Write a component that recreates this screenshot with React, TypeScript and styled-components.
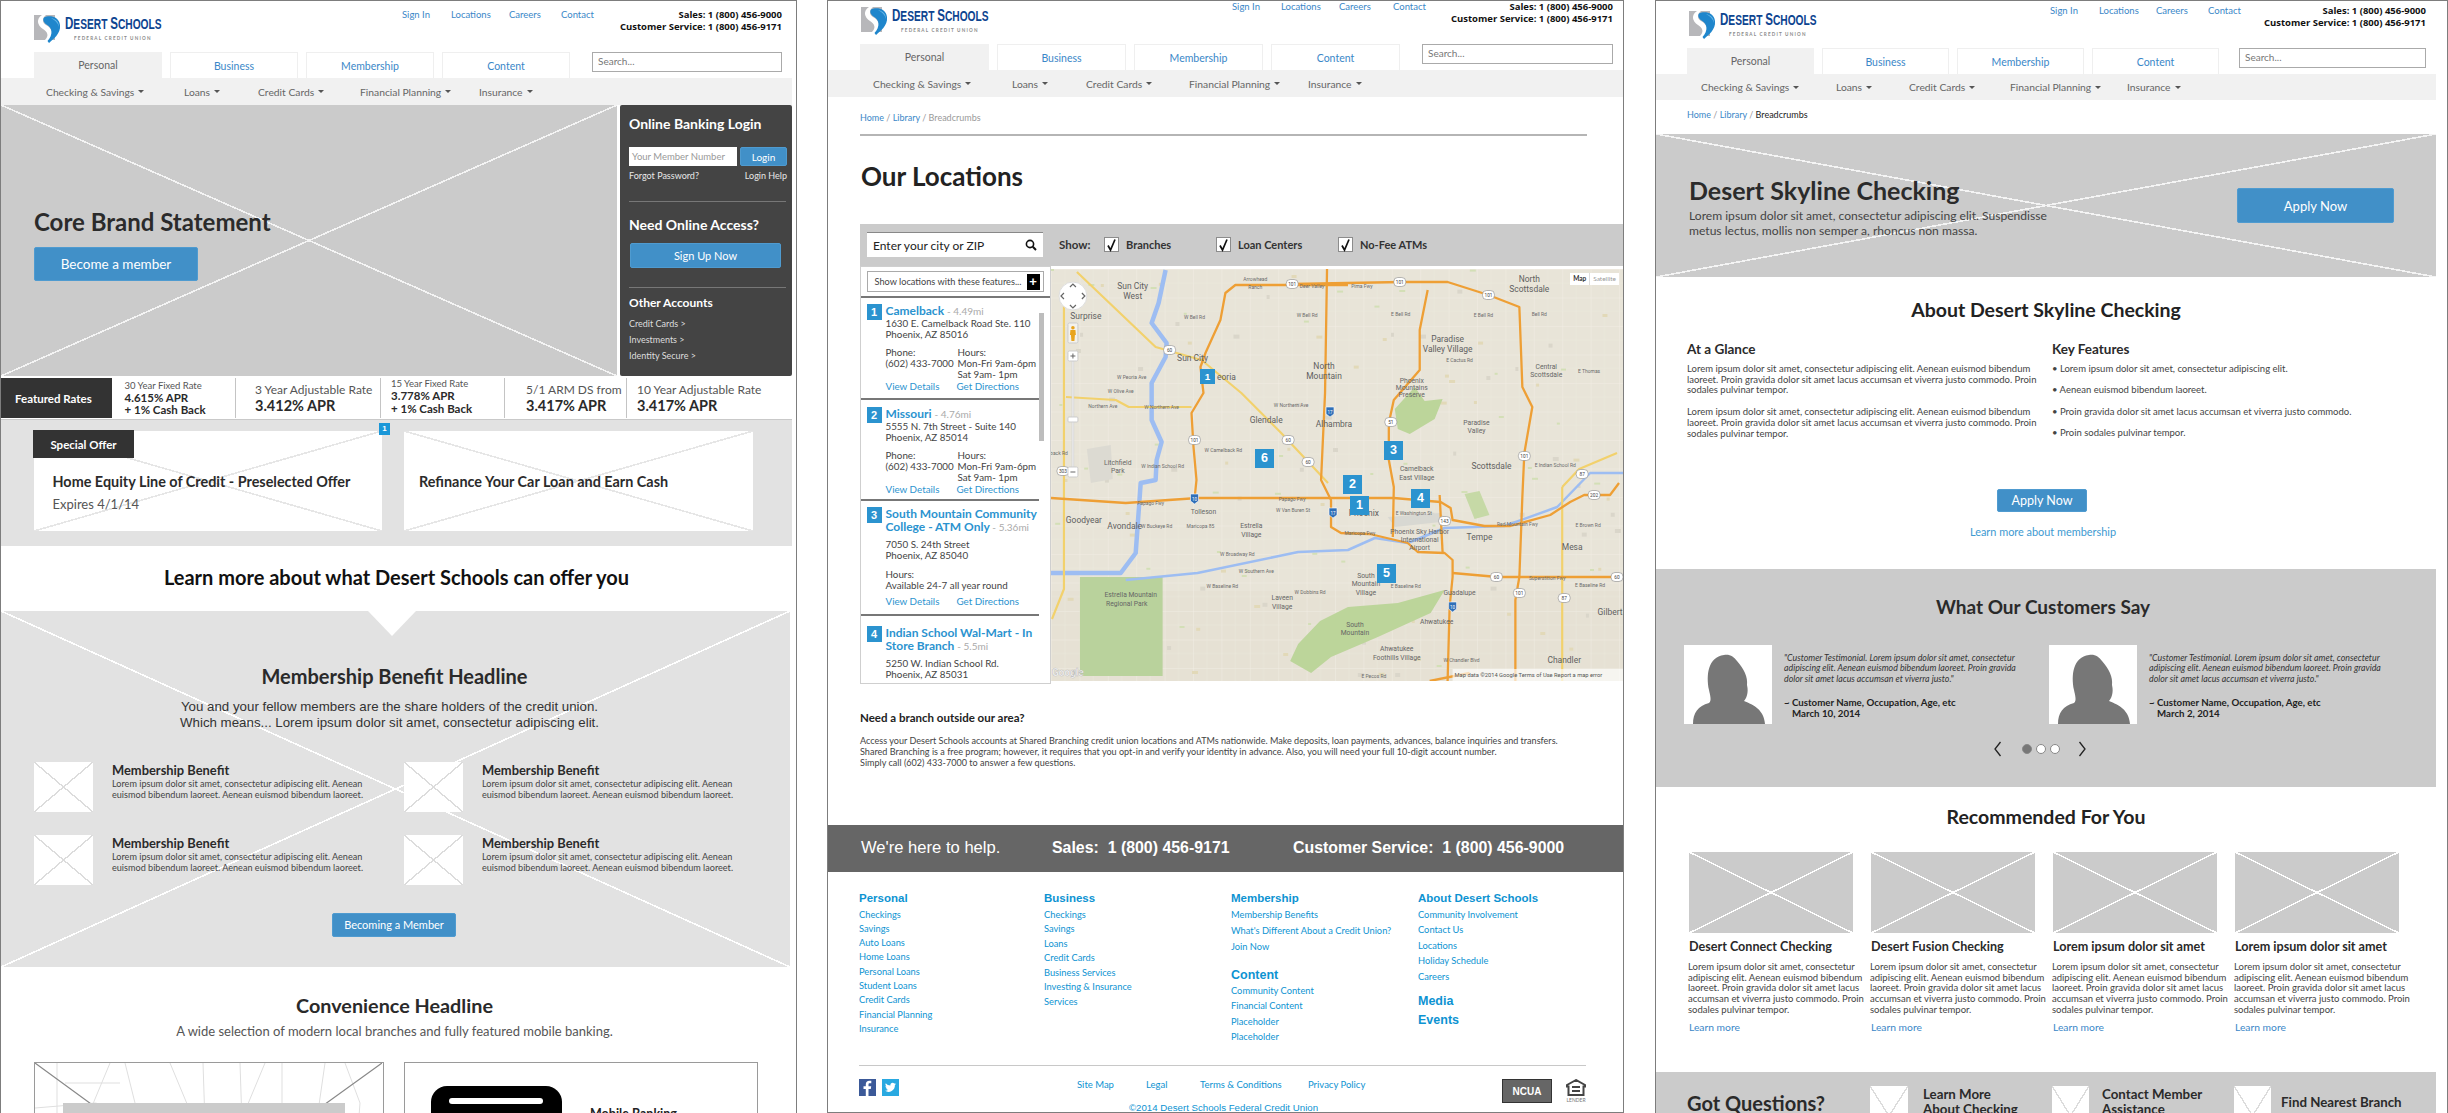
import React from "react";
import styled, { createGlobalStyle, css } from "styled-components";

const Global = createGlobalStyle`
  html, body { margin: 0; padding: 0; background: #fff; }
  body { font-family: Lato, "Open Sans", sans-serif; color: #222; width: 2448px; height: 1113px; overflow: hidden; }
  * { box-sizing: border-box; }
  a { color: inherit; text-decoration: none; }
`;

const crossed = (bg: string, line: string, w = 1) => css`
  background-color: ${bg};
  background-image:
    linear-gradient(to top right, transparent calc(50% - ${w}px), ${line} calc(50% - ${w}px), ${line} calc(50% + ${w}px), transparent calc(50% + ${w}px)),
    linear-gradient(to bottom right, transparent calc(50% - ${w}px), ${line} calc(50% - ${w}px), ${line} calc(50% + ${w}px), transparent calc(50% + ${w}px));
`;

const BLUE = "#3a87c8";
const BTN = "#4190c8";
const FOOT = "#0d93d2";

const Page = styled.div`
  display: flex;
  width: 2448px;
  height: 1113px;
  overflow: hidden;
`;
const Panel = styled.section<{ $w: number; $ml: number; $closed?: boolean }>`
  flex: 0 0 ${(p) => p.$w}px;
  margin-left: ${(p) => p.$ml}px;
  height: 1113px;
  overflow: hidden;
  border: 1px solid #7d7d7d;
  border-bottom: ${(p) => (p.$closed ? "1px solid #7d7d7d" : "none")};
`;
const Inner = styled.div<{ $w: number }>`
  width: ${(p) => p.$w}px;
`;

/* ---------- header ---------- */
const TopRow = styled.div<{ $h: number; $pt: number }>`
  height: ${(p) => p.$h}px;
  padding: ${(p) => p.$pt}px 10px 0 33px;
  display: flex;
  align-items: flex-start;
`;
const LogoWrap = styled.div`
  flex: 0 0 125px;
  display: flex;
  margin-top: 5px;
  gap: 1px;
`;
const LogoText = styled.div`
  width: 94px;
  padding-top: 2px;
  overflow: visible;
`;
const LogoName = styled.div`
  font-family: "Liberation Sans", sans-serif;
  font-weight: 700;
  font-size: 15px;
  line-height: 16px;
  color: #0d4490;
  transform: scaleX(0.68);
  transform-origin: left center;
  white-space: nowrap;
  b { font-size: 17px; }
`;
const LogoSub = styled.div`
  font-size: 4.6px;
  line-height: 6px;
  margin: 3px 0 0 9px;
  letter-spacing: 1.2px;
  color: #8a8a8a;
  font-weight: 700;
  white-space: nowrap;
`;
const TopLinks = styled.div<{ $ml: number }>`
  display: flex;
  margin-left: ${(p) => p.$ml}px;
`;
const TopLink = styled.a<{ $w: number }>`
  width: ${(p) => p.$w}px;
  font-size: 9.5px;
  line-height: 12px;
  color: ${BLUE};
  white-space: nowrap;
`;
const Phones = styled.div`
  margin-left: auto;
  text-align: right;
  font-family: "Open Sans", sans-serif;
  font-weight: 700;
  font-size: 9.5px;
  line-height: 11.5px;
  color: #111;
  white-space: nowrap;
`;
const TabRow = styled.div<{ $pl: number }>`
  display: flex;
  height: 26px;
  padding: 0 10px 0 ${(p) => p.$pl}px;
  gap: 8px;
`;
const Tab = styled.a<{ $w: number; $on?: boolean }>`
  width: ${(p) => p.$w}px;
  display: flex;
  align-items: center;
  justify-content: center;
  font-size: 10.5px;
  color: ${(p) => (p.$on ? "#666" : BLUE)};
  background: ${(p) => (p.$on ? "#f1f1f1" : "#fff")};
  border: ${(p) => (p.$on ? "none" : "1px solid #efefef")};
  border-bottom: none;
`;
const SearchBox = styled.div<{ $w: number }>`
  margin-left: auto;
  width: ${(p) => p.$w}px;
  height: 20px;
  border: 1px solid #aaa;
  color: #777;
  font-size: 10px;
  line-height: 17px;
  padding-left: 5px;
`;
const NavBand = styled.nav<{ $h: number }>`
  height: ${(p) => p.$h}px;
  background: #f1f1f1;
  display: flex;
  align-items: center;
  padding-left: 45px;
`;
const NavItem = styled.a<{ $w?: number }>`
  width: ${(p) => (p.$w ? p.$w + "px" : "auto")};
  font-size: 10.3px;
  color: #666;
  white-space: nowrap;
  display: flex;
  align-items: center;
  gap: 4px;
`;
const Caret = styled.i`
  display: inline-block;
  border-left: 3.5px solid transparent;
  border-right: 3.5px solid transparent;
  border-top: 3.5px solid #555;
`;

const LogoMark = () => (
  <svg width="30" height="30" viewBox="0 0 30 30">
    <rect x="0" y="1" width="21" height="25" fill="#b7b7ba" />
    <path d="M8 1 C2 5 3 11 9 15 C14 18 15 22 11 26 L4 26 L8 28 L16 26 C20 20 18 14 12 11 C8 9 8 4 12 1 Z" fill="#fff" />
    <path d="M10 3.5 C15 1 25 2 26 11 C27 20 19 25 15 29 L13.5 27 C19 21 19 14 12.5 10.5 C9.5 8.5 8.5 5.5 10 3.5 Z" fill="#1f86cc" />
    <path d="M17 4 C22 5 25 8 25 13 C24 9 21 6 17 4 Z" fill="#63b5e6" />
  </svg>
);

const Header: React.FC<{
  top: number; pt: number; linksMl: number; tabW: number; tabPl: number; searchW: number; navH: number; navW: number[]; linkW: number[];
}> = ({ top, pt, linksMl, tabW, tabPl, searchW, navH, navW, linkW }) => (
  <header>
    <TopRow $h={top} $pt={pt}>
      <LogoWrap>
        <LogoMark />
        <LogoText>
          <LogoName><b>D</b>ESERT <b>S</b>CHOOLS</LogoName>
          <LogoSub>FEDERAL CREDIT UNION</LogoSub>
        </LogoText>
      </LogoWrap>
      <TopLinks $ml={linksMl}>
        <TopLink $w={linkW[0]}>Sign In</TopLink>
        <TopLink $w={linkW[1]}>Locations</TopLink>
        <TopLink $w={linkW[2]}>Careers</TopLink>
        <TopLink $w={40}>Contact</TopLink>
      </TopLinks>
      <Phones>
        Sales: 1 (800) 456-9000
        <br />
        Customer Service: 1 (800) 456-9171
      </Phones>
    </TopRow>
    <TabRow $pl={tabPl}>
      <Tab $w={tabW} $on>Personal</Tab>
      <Tab $w={tabW}>Business</Tab>
      <Tab $w={tabW}>Membership</Tab>
      <Tab $w={tabW}>Content</Tab>
      <SearchBox $w={searchW}>Search...</SearchBox>
    </TabRow>
    <NavBand $h={navH}>
      <NavItem $w={navW[0]}>Checking &amp; Savings <Caret /></NavItem>
      <NavItem $w={navW[1]}>Loans <Caret /></NavItem>
      <NavItem $w={navW[2]}>Credit Cards <Caret /></NavItem>
      <NavItem $w={navW[3]}>Financial Planning <Caret /></NavItem>
      <NavItem>Insurance <Caret /></NavItem>
    </NavBand>
  </header>
);

/* ---------- shared ---------- */
const Button = styled.a<{ $w: number; $h: number; $fs: number }>`
  display: flex;
  align-items: center;
  justify-content: center;
  width: ${(p) => p.$w}px;
  height: ${(p) => p.$h}px;
  font-size: ${(p) => p.$fs}px;
  color: #fff;
  background: ${BTN};
  border: 1px solid #4f9bd0;
  border-radius: 2px;
  white-space: nowrap;
`;

/* ---------- panel 1 ---------- */
const HeroRow = styled.div`
  display: flex;
  height: 271px;
  gap: 3px;
`;
const Hero = styled.div`
  flex: 0 0 616px;
  padding: 102px 0 0 33px;
  ${crossed("#cbcbcb", "#f4f4f4", 0.8)}
`;
const HeroTitle = styled.h1`
  margin: 0 0 10px;
  font-size: 24px;
  line-height: 30px;
  font-weight: 700;
  color: #2b2b2b;
  white-space: nowrap;
`;
const LoginBox = styled.aside`
  flex: 1;
  background: #444;
  border-radius: 2px;
  padding: 10px 5px 0 9px;
  color: #fff;
`;
const LoginHead = styled.h3<{ $fs: number; $lh: number; $mt?: number }>`
  margin: ${(p) => p.$mt ?? 0}px 0 0;
  font-size: ${(p) => p.$fs}px;
  line-height: ${(p) => p.$lh}px;
  font-weight: 700;
  white-space: nowrap;
`;
const LoginRow = styled.div`
  display: flex;
  gap: 3px;
  height: 19px;
  margin-top: 14px;
`;
const MemberInput = styled.div`
  width: 108px;
  background: #fff;
  color: #999;
  font-size: 9.5px;
  line-height: 19px;
  padding-left: 3px;
  white-space: nowrap;
`;
const LoginMeta = styled.div`
  display: flex;
  justify-content: space-between;
  font-size: 9px;
  line-height: 12px;
  margin-top: 4px;
  color: #e8e8e8;
`;
const LoginRule = styled.hr<{ $mt: number }>`
  border: 0;
  height: 1px;
  width: 157px;
  background: #777;
  margin: ${(p) => p.$mt}px 0 0;
`;
const SignUp = styled(Button)`
  margin: 8.5px 0 0 1px;
`;
const OtherList = styled.div`
  margin-top: 4.5px;
`;
const OtherLink = styled.a`
  display: block;
  font-size: 9px;
  line-height: 16.4px;
  color: #ddd;
`;
const RatesBar = styled.div`
  display: flex;
  height: 44px;
  padding-top: 2px;
  padding-bottom: 1px;
  border-bottom: 1.5px solid #c9c9c9;
`;
const Featured = styled.div`
  flex: 0 0 111px;
  background: #333;
  color: #fff;
  font-weight: 700;
  font-size: 11.5px;
  display: flex;
  align-items: center;
  padding-left: 14px;
  white-space: nowrap;
`;
const Rate = styled.div<{ $w: number; $pl: number; $last?: boolean; $pb?: number }>`
  flex: 0 0 ${(p) => p.$w}px;
  padding-left: ${(p) => p.$pl}px;
  padding-bottom: ${(p) => p.$pb ?? 0}px;
  border-right: ${(p) => (p.$last ? "none" : "1px solid #c4c4c4")};
  display: flex;
  flex-direction: column;
  justify-content: center;
  white-space: nowrap;
`;
const RateLabel = styled.div<{ $big?: boolean }>`
  font-size: ${(p) => (p.$big ? 12 : 9.5)}px;
  line-height: ${(p) => (p.$big ? 15 : 12)}px;
  color: #555;
`;
const RateValue = styled.div<{ $big?: boolean }>`
  font-size: ${(p) => (p.$big ? 14.5 : 11.5)}px;
  line-height: ${(p) => (p.$big ? 17 : 12.5)}px;
  font-weight: 700;
  color: #2a2a2a;
`;
const OfferBand = styled.div`
  height: 126px;
  background: #e2e2e2;
  padding: 11px 0 0 33px;
  display: flex;
  gap: 22px;
`;
const OfferCard = styled.div<{ $w: number }>`
  position: relative;
  width: ${(p) => p.$w}px;
  height: 100px;
  display: grid;
  grid-template-rows: 27px 1fr;
  ${crossed("#fff", "#e6e6e6", 0.8)}
`;
const OfferTag = styled.div`
  grid-row: 1;
  margin: -1px 0 0 -1px;
  width: 101px;
  height: 28px;
  background: #333;
  color: #fff;
  font-size: 11.5px;
  font-weight: 700;
  display: flex;
  align-items: center;
  justify-content: center;
`;
const OfferCopy = styled.div<{ $pl: number }>`
  grid-row: 2;
  padding: 15px 0 0 ${(p) => p.$pl}px;
`;
const OfferTitle = styled.div`
  font-size: 14.4px;
  font-weight: 700;
  line-height: 17px;
  color: #2b2b2b;
  white-space: nowrap;
`;
const OfferSub = styled.div`
  font-size: 13px;
  line-height: 17px;
  margin-top: 6px;
  color: #555;
`;
const CornerBadge = styled.span`
  position: absolute;
  right: -8px;
  top: -8px;
  width: 11px;
  height: 12px;
  background: #1a97d8;
  color: #fff;
  font-family: "Liberation Sans", sans-serif;
  font-size: 8px;
  font-weight: 700;
  text-align: center;
  line-height: 12px;
`;
const SectionHead = styled.h2<{ $fs: number; $lh: number; $mt: number; $color?: string; $shift?: number }>`
  margin: ${(p) => p.$mt}px 0 0;
  font-size: ${(p) => p.$fs}px;
  line-height: ${(p) => p.$lh}px;
  font-weight: 700;
  text-align: center;
  color: ${(p) => p.$color ?? "#2a2a2a"};
  white-space: nowrap;
  transform: translateX(${(p) => p.$shift ?? 0}px);
`;
const BenefitBand = styled.div`
  position: relative;
  width: 789px;
  height: 355.5px;
  padding-top: 53px;
  margin-top: 22px;
  ${crossed("#e2e2e2", "#fff", 0.8)}
`;
const Notch = styled.i`
  position: absolute;
  left: 367px;
  top: 0;
  border-left: 24.5px solid transparent;
  border-right: 24.5px solid transparent;
  border-top: 25px solid #fff;
`;
const Sentence = styled.p`
  margin: 11px 0 0;
  font-family: "Liberation Sans", sans-serif;
  font-size: 13.3px;
  line-height: 16px;
  text-align: center;
  color: #333;
  transform: translateX(-6px);
`;
const BenefitGrid = styled.div`
  display: grid;
  grid-template-columns: 370px 370px;
  row-gap: 23px;
  margin-top: 31px;
  padding-left: 33px;
`;
const Benefit = styled.div`
  display: flex;
  gap: 19px;
`;
const Thumb = styled.div<{ $w: number; $h: number }>`
  flex: 0 0 ${(p) => p.$w}px;
  width: ${(p) => p.$w}px;
  height: ${(p) => p.$h}px;
  ${crossed("#fff", "#dcdcdc", 0.7)}
`;
const BenefitTitle = styled.div`
  font-weight: 700;
  font-size: 12.9px;
  line-height: 15px;
  margin-top: 1px;
  color: #2a2a2a;
`;
const BenefitBody = styled.div`
  font-size: 9.1px;
  line-height: 11px;
  color: #444;
  white-space: nowrap;
`;
const CenterBtn = styled(Button)`
  margin: 27.5px 0 0 331px;
`;
const SubHead = styled.p`
  margin: 5px 0 0;
  font-size: 13px;
  line-height: 18px;
  text-align: center;
  color: #555;
  transform: translateX(-2px);
`;
const BottomBoxes = styled.div`
  display: flex;
  gap: 20px;
  margin-top: 22px;
  padding-left: 33px;
`;
const MapBox = styled.div`
  position: relative;
  width: 350px;
  height: 120px;
  border: 1.5px solid #9a9a9a;
  padding: 40px 0 0 28px;
`;
const MapBackdrop = styled.svg`
  position: absolute;
  left: 0;
  top: 0;
`;
const MapGrey = styled.div`
  position: relative;
  width: 282px;
  height: 60px;
  background: #cbcbcb;
`;
const MobileBox = styled.div`
  width: 354px;
  height: 120px;
  border: 1.5px solid #9a9a9a;
  display: flex;
  padding-left: 26px;
`;
const Phone = styled.div`
  width: 131px;
  height: 90px;
  margin-top: 23px;
  background: #000;
  border-radius: 16px 16px 0 0;
  padding: 12px 0 0 18px;
`;
const PhoneSlot = styled.div`
  width: 94px;
  height: 6px;
  background: #fff;
  border-radius: 3px;
`;
const MobileTitle = styled.div`
  margin: 43px 0 0 28px;
  font-weight: 700;
  font-size: 12.5px;
  line-height: 16px;
`;

/* ---------- panel 2 ---------- */
const Crumbs = styled.div<{ $mt: number; $dark?: boolean; $pl: number }>`
  margin-top: ${(p) => p.$mt}px;
  padding-left: ${(p) => p.$pl}px;
  font-size: 9px;
  line-height: 12px;
  color: #999;
  a { color: ${BLUE}; }
  b { font-weight: 400; color: ${(p) => (p.$dark ? "#222" : "#999")}; }
`;
const Rule = styled.hr<{ $mt: number; $ml: number; $w: number; $c: string }>`
  border: 0;
  height: 1.5px;
  background: ${(p) => p.$c};
  width: ${(p) => p.$w}px;
  margin: ${(p) => p.$mt}px 0 0 ${(p) => p.$ml}px;
`;
const PageTitle = styled.h1`
  margin: 24px 0 0 33px;
  font-size: 26px;
  line-height: 32px;
  font-weight: 700;
  color: #222;
`;
const FilterBand = styled.div`
  margin: 32px 0 0 32px;
  height: 42px;
  background: #cbcbcb;
  display: flex;
  align-items: center;
  padding-left: 7px;
`;
const CityBox = styled.div`
  width: 176px;
  height: 25px;
  background: #fff;
  border-top: 1px solid #888;
  font-size: 12px;
  color: #222;
  display: flex;
  align-items: center;
  justify-content: space-between;
  padding: 0 6px;
`;
const ShowLabel = styled.div`
  width: 45px;
  margin-left: 16px;
  font-weight: 700;
  font-size: 11.5px;
  color: #333;
`;
const Check = styled.div<{ $w: number }>`
  width: ${(p) => p.$w}px;
  display: flex;
  align-items: center;
  gap: 7px;
  font-weight: 700;
  font-size: 11px;
  color: #333;
  white-space: nowrap;
`;
const CheckBox = styled.span`
  width: 15px;
  height: 15px;
  background: #fff;
  border: 1.5px solid #8c8c8c;
  display: flex;
  align-items: center;
  justify-content: center;
`;
const LocatorRow = styled.div`
  display: flex;
  margin-left: 32px;
  height: 418px;
`;
const ListCol = styled.div`
  position: relative;
  flex: 0 0 191px;
  border: 1.5px solid #cfcfcf;
  overflow: hidden;
`;
const FeatureBox = styled.div`
  margin: 4.5px 0 0 5.5px;
  width: 177px;
  height: 21px;
  border: 1.5px solid #aaa;
  font-size: 9.2px;
  color: #444;
  display: flex;
  align-items: center;
  justify-content: space-between;
  padding: 0 3px 0 7px;
  white-space: nowrap;
`;
const Plus = styled.span`
  width: 13px;
  height: 16px;
  background: #000;
  color: #fff;
  font: 700 13px/16px "Liberation Sans", sans-serif;
  text-align: center;
`;
const ListRule = styled.hr`
  border: 0;
  height: 2px;
  background: #777;
  margin: 3.5px 0 0;
`;
const Loc = styled.article<{ $h: number; $pt: number; $end?: boolean }>`
  width: 178px;
  height: ${(p) => p.$h}px;
  padding: ${(p) => p.$pt}px 0 0 5.5px;
  border-bottom: ${(p) => (p.$end ? "none" : "2px solid #777")};
  display: flex;
  gap: 4px;
`;
const LocNum = styled.span`
  flex: 0 0 15px;
  height: 16px;
  background: #2b93cf;
  color: #fff;
  font: 700 11px/16px "Liberation Sans", sans-serif;
  text-align: center;
`;
const LocBody = styled.div`
  flex: 1;
  min-width: 0;
`;
const LocName = styled.div`
  font-size: 12px;
  line-height: 13px;
  font-weight: 700;
  color: #2b93cf;
  white-space: nowrap;
  span { font-size: 10px; font-weight: 400; color: #aaa; }
`;
const LocLine = styled.div<{ $mt?: number }>`
  font-size: 9.8px;
  line-height: 11px;
  color: #444;
  margin-top: ${(p) => p.$mt ?? 0}px;
  white-space: nowrap;
`;
const LocColumns = styled.div`
  display: grid;
  grid-template-columns: 72px 1fr;
  margin-top: 7px;
`;
const LocLinks = styled.div<{ $mt: number }>`
  display: grid;
  grid-template-columns: 71px 1fr;
  font-size: 9.8px;
  line-height: 11px;
  color: #2b93cf;
  margin-top: ${(p) => p.$mt}px;
`;
const ScrollThumb = styled.i`
  position: absolute;
  left: 178px;
  top: 46px;
  width: 5px;
  height: 128px;
  background: #bdbdbd;
`;
const MapArea = styled.div`
  position: relative;
  flex: 0 0 572px;
  height: 412px;
  margin-top: 3px;
  background: #e9e5d8;
  overflow: hidden;
`;
const MapSvg = styled.svg`
  display: block;
`;
const Pin = styled.span<{ $x: number; $y: number; $s: number }>`
  position: absolute;
  left: ${(p) => p.$x}px;
  top: ${(p) => p.$y}px;
  width: ${(p) => p.$s}px;
  height: ${(p) => p.$s}px;
  background: #2b93cf;
  color: #fff;
  font: 700 ${(p) => p.$s * 0.66}px/${(p) => p.$s}px "Liberation Sans", sans-serif;
  text-align: center;
`;
const MapToggle = styled.div`
  position: absolute;
  right: 4px;
  top: 4px;
  display: flex;
  font-size: 6.5px;
  line-height: 12px;
  background: #fff;
  color: #999;
  span { padding: 0 3px; }
  span:first-child { color: #333; font-weight: 700; border-right: 1px solid #ddd; }
`;
const NeedHead = styled.h4`
  margin: 27px 0 0 32px;
  font-size: 11.5px;
  line-height: 14px;
  font-weight: 700;
  color: #222;
`;
const NeedText = styled.p`
  margin: 10.5px 0 0 32px;
  font-size: 9.07px;
  line-height: 11px;
  color: #444;
  white-space: nowrap;
`;
const HelpBand = styled.div`
  margin-top: 56.5px;
  height: 47px;
  background: #666;
  color: #fff;
  font-family: "Liberation Sans", sans-serif;
  display: flex;
  align-items: center;
  padding-left: 33px;
  white-space: nowrap;
`;
const HelpLead = styled.div`
  width: 191px;
  font-size: 16.6px;
`;
const HelpStrong = styled.div<{ $w: number }>`
  width: ${(p) => p.$w}px;
  font-size: 15.9px;
  font-weight: 700;
  white-space: pre;
`;
const FooterCols = styled.div`
  height: 193px;
  padding: 19px 0 0 31px;
  display: grid;
  grid-template-columns: 185px 187px 187px 1fr;
`;
const FootHead = styled.div<{ $mt?: number; $big?: boolean }>`
  font-family: "Liberation Sans", sans-serif;
  font-weight: 700;
  font-size: ${(p) => (p.$big ? 12.5 : 11.5)}px;
  line-height: 14px;
  color: ${FOOT};
  margin-top: ${(p) => p.$mt ?? 0}px;
  white-space: nowrap;
`;
const FootList = styled.div<{ $lh: number; $mt?: number }>`
  margin-top: ${(p) => p.$mt ?? 3}px;
  font-size: 9.3px;
  line-height: ${(p) => p.$lh}px;
  color: ${FOOT};
  a { display: block; white-space: nowrap; }
`;
const FootBottom = styled.div`
  display: flex;
  height: 24px;
  margin-top: 13px;
  padding-left: 31px;
`;
const Social = styled.div`
  display: flex;
  gap: 6px;
`;
const LegalLinks = styled.div`
  display: flex;
  margin-left: 178px;
  font-size: 9.5px;
  line-height: 12px;
  color: ${FOOT};
`;
const Legal = styled.a<{ $w: number }>`
  width: ${(p) => p.$w}px;
  white-space: nowrap;
`;
const Badges = styled.div`
  margin-left: auto;
  margin-right: 37px;
  display: flex;
  gap: 14px;
`;
const Ncua = styled.div`
  width: 50px;
  height: 24px;
  background: #666;
  border: 1px solid #333;
  color: #fff;
  font: 700 10px/24px "Liberation Sans", sans-serif;
  text-align: center;
`;
const Copy = styled.div`
  font-family: "Liberation Sans", sans-serif;
  font-size: 9.7px;
  line-height: 10px;
  text-align: center;
  color: ${FOOT};
  transform: translateX(-2px);
`;

/* ---------- panel 3 ---------- */
const SkyHero = styled.div`
  margin-top: 13px;
  height: 143px;
  padding: 42px 42px 0 33px;
  display: flex;
  justify-content: space-between;
  align-items: flex-start;
  ${crossed("#cbcbcb", "#f4f4f4", 0.8)}
`;
const SkyTitle = styled.h1`
  margin: 0;
  font-size: 25px;
  line-height: 28px;
  font-weight: 700;
  color: #2b2b2b;
  white-space: nowrap;
`;
const SkyText = styled.p`
  margin: 3.5px 0 0;
  font-size: 12.1px;
  line-height: 15px;
  color: #444;
`;
const SkyBtn = styled(Button)`
  margin-top: 12px;
`;
const TwoCols = styled.div`
  margin-top: 18px;
  padding-left: 31px;
  display: grid;
  grid-template-columns: 365px 1fr;
`;
const MiniHead = styled.h4`
  margin: 0 0 7px;
  font-size: 13.5px;
  line-height: 16px;
  font-weight: 700;
  color: #2a2a2a;
`;
const Copy10 = styled.p<{ $mb?: number }>`
  margin: 0 0 ${(p) => p.$mb ?? 11}px;
  font-size: 9.5px;
  line-height: 10.7px;
  color: #444;
`;
const ApplyBtn = styled(Button)`
  margin: 39px 0 0 341px;
`;
const LearnLink = styled.a`
  display: block;
  width: 774px;
  margin-top: 13px;
  font-size: 10.9px;
  line-height: 14px;
  text-align: center;
  color: #3d9ad1;
`;
const SayBand = styled.div`
  margin-top: 30px;
  height: 218px;
  padding-top: 26px;
  background: #cbcbcb;
`;
const SayRow = styled.div`
  margin-top: 26px;
  padding-left: 28px;
  display: grid;
  grid-template-columns: 365px 1fr;
`;
const Say = styled.div`
  display: flex;
  gap: 12px;
`;
const Avatar = styled.svg`
  flex: 0 0 88px;
  background: #fff;
`;
const Quote = styled.div`
  padding-top: 7.5px;
  font-size: 8.8px;
  line-height: 10.7px;
  font-style: italic;
  color: #333;
  white-space: nowrap;
`;
const Cite = styled.div`
  margin-top: 12px;
  font-style: normal;
  font-weight: 700;
  color: #222;
  font-size: 9.7px;
  padding-left: 8px;
  text-indent: -8px;
`;
const Pager = styled.div`
  margin-top: 17px;
  display: flex;
  align-items: center;
  justify-content: center;
  transform: translateX(-6px);
`;
const Dot = styled.i<{ $on?: boolean }>`
  width: 10px;
  height: 10px;
  border-radius: 50%;
  margin: 0 2.2px;
  background: ${(p) => (p.$on ? "#777" : "#fff")};
  border: 1px solid #888;
`;
const RecGrid = styled.div`
  margin-top: 23px;
  padding-left: 33px;
  display: grid;
  grid-template-columns: repeat(4, 164px);
  column-gap: 18px;
`;
const RecImg = styled.div`
  height: 81px;
  ${crossed("#cbcbcb", "#fff", 0.7)}
`;
const RecTitle = styled.div`
  margin-top: 6px;
  font-size: 12.6px;
  line-height: 16px;
  font-weight: 700;
  color: #2a2a2a;
  white-space: nowrap;
`;
const RecText = styled.p`
  margin: 6.7px 0 0 -1px;
  font-size: 9.5px;
  line-height: 10.7px;
  color: #444;
  white-space: nowrap;
`;
const RecMore = styled.a`
  display: block;
  margin-top: 6px;
  font-size: 10.3px;
  line-height: 12px;
  color: ${BLUE};
`;
const QuestionBand = styled.div`
  margin-top: 39px;
  height: 60px;
  background: #cbcbcb;
  display: flex;
  padding: 14px 0 0 31px;
`;
const QuestionTitle = styled.h3`
  flex: 0 0 183px;
  margin: 4px 0 0;
  font-size: 20px;
  line-height: 26px;
  font-weight: 700;
  color: #2a2a2a;
`;
const QuestionItem = styled.div<{ $gap: number }>`
  flex: 0 0 182px;
  display: flex;
  gap: ${(p) => p.$gap}px;
`;
const QuestionText = styled.div<{ $mt: number }>`
  margin-top: ${(p) => p.$mt}px;
  font-size: 13.3px;
  line-height: 15px;
  font-weight: 700;
  color: #2a2a2a;
  white-space: nowrap;
`;

/* ---------- map drawing ---------- */
const poly = (pts: number[][]) => pts.map((p) => p.join(",")).join(" ");
const orange = [
  [[277, 0], [275, 124], [271, 211], [281, 231], [281, 258], [291, 264], [320, 265], [358, 274], [368, 283], [395, 284], [403, 291], [403, 308], [400, 338], [398, 412]],
  [[298, 16], [185, 16], [175, 24], [170, 51], [155, 84], [150, 98], [153, 124], [141, 144], [143, 178], [146, 211], [144, 230]],
  [[242, 15], [352, 13], [398, 13], [439, 26], [470, 38], [473, 118], [483, 138], [475, 184], [473, 228], [470, 308], [466, 331], [466, 412]],
  [[0, 229], [75, 234], [147, 229], [344, 229], [391, 233], [401, 239], [403, 251], [435, 257], [461, 257], [501, 246], [521, 233], [535, 226], [561, 226], [570, 214]],
  [[378, 21], [370, 61], [370, 101], [344, 131], [339, 154], [339, 191], [344, 218], [343, 268]],
  [[390, 226], [393, 284]],
  [[403, 304], [448, 308], [574, 308]],
  [[380, 412], [420, 404]],
];
const yellow = [
  [[26, 3], [105, 78], [151, 91], [191, 124], [231, 164], [278, 214]],
  [[15, 128], [65, 131], [78, 138], [141, 138]],
  [[13, 31], [13, 320], [1, 350]],
  [[513, 218], [513, 412]],
  [[513, 218], [530, 200], [568, 184]],
];
const rivers = [
  [[115, 1], [108, 34], [101, 54], [116, 74], [115, 88], [101, 114], [101, 151], [111, 173], [106, 191], [105, 211], [90, 214], [85, 284], [70, 304], [0, 304]],
  [[75, 311], [147, 304], [224, 288], [248, 283], [298, 281], [325, 269], [358, 274], [395, 259], [455, 257], [508, 238], [541, 204], [574, 204]],
];
const bigLabels: [string, number, number][] = [
  ["Sun City", 82, 20], ["West", 82, 30], ["Surprise", 35, 50], ["North", 480, 13], ["Scottsdale", 480, 23], ["Paradise", 398, 73], ["Valley Village", 398, 83],
  ["North", 274, 100], ["Mountain", 274, 110], ["Sun City", 142, 92], ["eoria", 176, 111], ["Glendale", 216, 154], ["Alhambra", 284, 158], ["Phoenix", 314, 247],
  ["Scottsdale", 442, 200], ["Goodyear", 33, 254], ["Avondale", 74, 260], ["Tempe", 430, 271], ["Mesa", 523, 281], ["Gilbert", 561, 346], ["Chandler", 515, 394],
];
const midLabels: [string, number, number][] = [
  ["Central", 497, 100], ["Scottsdale", 497, 108], ["Paradise", 427, 156], ["Valley", 427, 164], ["Camelback", 367, 202], ["East Village", 367, 211], ["Phoenix Sky Harbor", 370, 265], ["International", 370, 273], ["Airport", 370, 281],
  ["South", 316, 309], ["Mountain", 316, 317], ["Village", 316, 326], ["Laveen", 232, 331], ["Village", 232, 340], ["Estrella", 201, 259], ["Village", 201, 268], ["Tolleson", 153, 245], ["Ahwatukee", 347, 382], ["Foothills Village", 347, 391],
  ["Litchfield", 67, 196], ["Park", 67, 204], ["Estrella Mountain", 80, 328], ["Regional Park", 76, 337], ["Guadalupe", 410, 326], ["Phoenix", 362, 114], ["Mountains", 362, 121], ["Preserve", 362, 128], ["South", 305, 358], ["Mountain", 305, 366], ["Ahwatukee", 387, 355],
];
const tinyLabels: [string, number, number][] = [
  ["W Bell Rd", 144, 50], ["W Bell Rd", 257, 48], ["E Bell Rd", 351, 47], ["E Bell Rd", 434, 48], ["Bell Rd", 490, 47], ["W Peoria Ave", 81, 110], ["W Olive Ave", 70, 124], ["Northern Ave", 52, 139],
  ["W Northern Ave", 111, 140], ["W Northern Ave", 241, 138], ["W Camelback Rd", 173, 183], ["W Indian School Rd", 112, 199], ["W Van Buren St", 243, 243], ["E Washington St", 364, 246], ["W Buckeye Rd", 106, 259],
  ["Maricopa 85", 150, 259], ["W Broadway Rd", 187, 287], ["W Southern Ave", 206, 304], ["W Baseline Rd", 172, 319], ["E Baseline Rd", 356, 319], ["E Baseline Rd", 541, 318], ["E Brown Rd", 539, 258], ["E Indian School Rd", 506, 198],
  ["W Dobbins Rd", 260, 325], ["W Chandler Blvd", 412, 393], ["E Pecos Rd", 324, 409], ["E Cactus Rd", 410, 93], ["Deer Valley", 262, 19], ["Pima Fwy", 312, 19], ["Papago Fwy", 242, 232], ["Papago Fwy", 100, 236], ["Maricopa Fwy", 310, 266], ["Superstition Fwy", 498, 311], ["Red Mountain Fwy", 468, 257], ["Arrowhead", 205, 12], ["Ranch", 205, 20], ["back Rd", 8, 186], ["E Thomas", 540, 104],
];
const shields: [string, number, number][] = [
  ["101", 242, 15], ["101", 350, 13], ["101", 439, 26], ["60", 119, 81], ["101", 144, 171], ["60", 238, 171], ["60", 258, 193], ["51", 341, 153], ["101", 475, 187], ["303", 12, 202], ["87", 533, 205], ["202", 545, 226], ["143", 395, 252], ["60", 447, 308], ["101", 470, 324], ["87", 515, 329], ["60", 568, 308],
];
const interstates: [string, number, number][] = [["17", 280, 143], ["17", 283, 244], ["10", 144, 230], ["10", 403, 338]];
const flecks = Array.from({ length: 120 }, (_, i) => [(i * 137.3) % 570, (i * 71.9 + i * i * 0.7) % 405, i % 3 === 0 ? "#d3dfb6" : i % 3 === 1 ? "#e2d9b8" : "#dad6ca"]);

const LocatorMap = () => (
  <MapSvg width="572" height="412" viewBox="0 0 574 412" preserveAspectRatio="none">
    <defs>
      <pattern id="grid" width="28.5" height="28.5" patternUnits="userSpaceOnUse">
        <path d="M0 0H28.5M0 0V28.5" stroke="#f2efe6" strokeWidth="0.9" fill="none" />
        <path d="M14 0V28.5M0 14H28.5" stroke="#ece8dc" strokeWidth="0.4" fill="none" />
      </pattern>
    </defs>
    <rect width="574" height="412" fill="#e8e4d8" />
    <rect y="322" x="0" width="574" height="90" fill="#e6e1d4" />
    <rect width="574" height="412" fill="url(#grid)" />
    {flecks.map((f, i) => (
      <rect key={i} x={f[0] as number} y={f[1] as number} width={3 + (i % 4)} height={2 + (i % 3)} fill={f[2] as string} />
    ))}
    <path d="M36 180 L60 176 L62 210 L40 214Z" fill="#dcdad2" />
    <path d="M345 140 L365 118 L375 132 L393 130 L385 150 L360 165 L348 160Z" fill="#bcd59a" />
    <rect x="29" y="308" width="83" height="99" fill="#b9d29c" />
    <path d="M248 375 L270 352 L298 338 L348 334 L395 321 L381 344 L328 368 L281 388 L261 404 L240 392Z" fill="#bcd59a" />
    <path d="M415 225 L430 222 L440 246 L425 250Z" fill="#c6d9a6" />
    <path d="M338 248 L390 244 L400 252 L345 258Z" fill="#d8d8d2" />
    {rivers.map((r, i) => (
      <polyline key={i} points={poly(r)} fill="none" stroke="#9dbdf2" strokeWidth={i === 0 ? 4.5 : 2.5} strokeLinejoin="round" />
    ))}
    {yellow.map((r, i) => (
      <polyline key={i} points={poly(r)} fill="none" stroke="#f2d16c" strokeWidth="2.2" strokeLinejoin="round" />
    ))}
    {orange.map((r, i) => (
      <polyline key={i} points={poly(r)} fill="none" stroke="#ee9f35" strokeWidth="2.3" strokeLinejoin="round" />
    ))}
    <g fontFamily="Roboto, sans-serif" fontSize="8.5" fill="#5f5f5f" textAnchor="middle">
      {bigLabels.map(([t, x, y], i) => <text key={i} x={x} y={y}>{t}</text>)}
    </g>
    <g fontFamily="Roboto, sans-serif" fontSize="6.8" fill="#666" textAnchor="middle">
      {midLabels.map(([t, x, y], i) => <text key={i} x={x} y={y}>{t}</text>)}
    </g>
    <g fontFamily="Roboto, sans-serif" fontSize="5" fill="#6b6b6b" textAnchor="middle">
      {tinyLabels.map(([t, x, y], i) => <text key={i} x={x} y={y}>{t}</text>)}
    </g>
    {shields.map(([t, x, y], i) => (
      <g key={i}>
        <rect x={x - 6} y={y - 4.5} width="12" height="9" rx="4" fill="#fff" stroke="#888" strokeWidth="0.6" />
        <text x={x} y={y + 2} fontSize="4.8" fontFamily="Roboto, sans-serif" fill="#444" textAnchor="middle">{t}</text>
      </g>
    ))}
    {interstates.map(([t, x, y], i) => (
      <g key={i}>
        <path d={`M${x - 4} ${y - 5}H${x + 4}V${y + 2}L${x} ${y + 5}L${x - 4} ${y + 2}Z`} fill="#2f6fb8" stroke="#fff" strokeWidth="0.6" />
        <text x={x} y={y + 2} fontSize="4.5" fontFamily="Roboto, sans-serif" fill="#fff" textAnchor="middle">{t}</text>
      </g>
    ))}
    <circle cx="22" cy="27" r="14" fill="#fff" stroke="#ddd" />
    <path d="M19 18l3-3 3 3M19 36l3 3 3-3M13 24l-3 3 3 3M31 24l3 3-3 3" fill="none" stroke="#666" strokeWidth="1.2" />
    <rect x="17" y="54" width="10" height="20" rx="1.5" fill="#f4f2ec" stroke="#ccc" />
    <path d="M22 57a1.8 1.8 0 1 1 0 3.6a1.8 1.8 0 0 1 0-3.6M19.5 61h5l.5 5h-1l-.5 6h-3l-.5-6h-1z" fill="#e8a41e" />
    <rect x="21" y="92" width="2" height="108" fill="#e8e8e8" stroke="#ccc" strokeWidth="0.4" />
    <rect x="17" y="82" width="10" height="10" rx="1.5" fill="#fff" stroke="#ccc" />
    <path d="M19.5 87h5M22 84.500v5" stroke="#666" />
    <rect x="17" y="198" width="10" height="10" rx="1.5" fill="#fff" stroke="#ccc" />
    <path d="M19.5 203h5" stroke="#666" />
    <rect x="17" y="148" width="10" height="5" rx="1" fill="#fff" stroke="#ccc" />
    <text x="1" y="407" fontFamily="Roboto, sans-serif" fontSize="10" fontWeight="700" fill="#fff" stroke="#bbb" strokeWidth="0.5">Google</text>
    <rect x="403" y="400" width="171" height="12" fill="#fff" fillOpacity="0.65" />
    <text x="405" y="408" fontFamily="Roboto, sans-serif" fontSize="5.8" fill="#555">Map data ©2014 Google     Terms of Use     Report a map error</text>
  </MapSvg>
);

const FaintMap = () => (
  <MapBackdrop width="347" height="117" viewBox="0 0 347 117">
    <g fill="none" stroke="#dfdfdf" strokeWidth="1">
      <path d="M22 0V117M90 0L100 40L96 60M135 0L160 60M168 0L170 60M205 0L207 60M247 0V117M290 0L280 70M310 0L325 40L322 80M0 45L60 40L80 44M30 20H85M75 0L50 60M230 0L205 60M200 48H222M280 70H330L347 90" />
    </g>
    <path d="M0 0L78 57M347 0L268 57" stroke="#888" strokeWidth="1.2" fill="none" />
  </MapBackdrop>
);

const Person = () => (
  <Avatar width="88" height="79" viewBox="0 0 88 79">
    <path d="M9 79 C9 68 14 61 25 58 C28 56 26 50 25 45 C22 30 24 12 40 10 C46 9 50 12 53 16 C60 24 64 32 63 40 C65 48 62 54 60 56 C70 60 80 65 81 79 Z" fill="#777" />
  </Avatar>
);

const Chevron = ({ left, ml, mr }: { left?: boolean; ml: number; mr: number }) => (
  <svg width="9" height="16" viewBox="0 0 9 16" style={{ marginLeft: ml, marginRight: mr }}>
    <path d={left ? "M7.5 1L2 8l5.5 7" : "M1.5 1L7 8l-5.5 7"} fill="none" stroke="#222" strokeWidth="1.3" />
  </svg>
);

const Tick = () => (
  <svg width="13" height="14" viewBox="0 0 13 14">
    <path d="M3 7.5L5.5 12L10 1.5" fill="none" stroke="#111" strokeWidth="1.7" />
  </svg>
);

const benefits = [0, 1, 2, 3];
const recs = ["Desert Connect Checking", "Desert Fusion Checking", "Lorem ipsum dolor sit amet", "Lorem ipsum dolor sit amet"];

const Loc1: React.FC<{ n: number; name: string; dist: string; a: string; b: string; h: number; pt: number }> = ({ n, name, dist, a, b, h, pt }) => (
  <Loc $h={h} $pt={pt}>
    <LocNum>{n}</LocNum>
    <LocBody>
      <LocName>{name} <span>- {dist}</span></LocName>
      <LocLine>{a}</LocLine>
      <LocLine>{b}</LocLine>
      <LocColumns>
        <div>
          <LocLine>Phone:</LocLine>
          <LocLine>(602) 433-7000</LocLine>
        </div>
        <div>
          <LocLine>Hours:</LocLine>
          <LocLine>Mon-Fri 9am-6pm</LocLine>
          <LocLine>Sat 9am- 1pm</LocLine>
        </div>
      </LocColumns>
      <LocLinks $mt={1}><a>View Details</a><a>Get Directions</a></LocLinks>
    </LocBody>
  </Loc>
);

export default function App() {
  return (
    <Page>
      <Global />
      {/* PANEL 1 */}
      <Panel $w={797} $ml={0}>
        <Inner $w={791}>
          <Header top={51} pt={8} linksMl={243} tabW={128} tabPl={33} searchW={190} navH={27} navW={[138, 74, 102, 119]} linkW={[49, 58, 52]} />
          <HeroRow>
            <Hero>
              <HeroTitle>Core Brand Statement</HeroTitle>
              <Button $w={164} $h={34} $fs={13.5}>Become a member</Button>
            </Hero>
            <LoginBox>
              <LoginHead $fs={14} $lh={18}>Online Banking Login</LoginHead>
              <LoginRow>
                <MemberInput>Your Member Number</MemberInput>
                <Button $w={47} $h={19} $fs={10}>Login</Button>
              </LoginRow>
              <LoginMeta><span>Forgot Password?</span><span>Login Help</span></LoginMeta>
              <LoginRule $mt={19} />
              <LoginHead $fs={14} $lh={18} $mt={14}>Need Online Access?</LoginHead>
              <SignUp $w={151} $h={25.5} $fs={11}>Sign Up Now</SignUp>
              <LoginRule $mt={19} />
              <LoginHead $fs={12} $lh={16} $mt={7}>Other Accounts</LoginHead>
              <OtherList>
                <OtherLink>Credit Cards &gt;</OtherLink>
                <OtherLink>Investments &gt;</OtherLink>
                <OtherLink>Identity Secure &gt;</OtherLink>
              </OtherList>
            </LoginBox>
          </HeroRow>
          <RatesBar>
            <Featured>Featured Rates</Featured>
            <Rate $w={124} $pl={12.5}>
              <RateLabel>30 Year Fixed Rate</RateLabel>
              <RateValue>4.615% APR</RateValue>
              <RateValue>+ 1% Cash Back</RateValue>
            </Rate>
            <Rate $w={145} $pl={19}>
              <RateLabel $big>3 Year Adjustable Rate</RateLabel>
              <RateValue $big>3.412% APR</RateValue>
            </Rate>
            <Rate $w={124} $pl={10} $pb={3}>
              <RateLabel>15 Year Fixed Rate</RateLabel>
              <RateValue>3.778% APR</RateValue>
              <RateValue>+ 1% Cash Back</RateValue>
            </Rate>
            <Rate $w={122} $pl={21}>
              <RateLabel $big>5/1 ARM DS from</RateLabel>
              <RateValue $big>3.417% APR</RateValue>
            </Rate>
            <Rate $w={165} $pl={10} $last>
              <RateLabel $big>10 Year Adjustable Rate</RateLabel>
              <RateValue $big>3.417% APR</RateValue>
            </Rate>
          </RatesBar>
          <OfferBand>
            <OfferCard $w={348}>
              <OfferTag>Special Offer</OfferTag>
              <OfferCopy $pl={18.5}>
                <OfferTitle>Home Equity Line of Credit - Preselected Offer</OfferTitle>
                <OfferSub>Expires 4/1/14</OfferSub>
              </OfferCopy>
              <CornerBadge>1</CornerBadge>
            </OfferCard>
            <OfferCard $w={349}>
              <OfferCopy $pl={15}>
                <OfferTitle>Refinance Your Car Loan and Earn Cash</OfferTitle>
              </OfferCopy>
            </OfferCard>
          </OfferBand>
          <SectionHead $fs={20} $lh={24} $mt={19} $color="#111">Learn more about what Desert Schools can offer you</SectionHead>
          <BenefitBand>
            <Notch />
            <SectionHead $fs={20} $lh={24} $mt={0} $shift={-1}>Membership Benefit Headline</SectionHead>
            <Sentence>
              You and your fellow members are the share holders of the credit union.
              <br />
              Which means... Lorem ipsum dolor sit amet, consectetur adipiscing elit.
            </Sentence>
            <BenefitGrid>
              {benefits.map((b) => (
                <Benefit key={b}>
                  <Thumb $w={59} $h={50} />
                  <div>
                    <BenefitTitle>Membership Benefit</BenefitTitle>
                    <BenefitBody>Lorem ipsum dolor sit amet, consectetur adipiscing elit. Aenean</BenefitBody>
                    <BenefitBody>euismod bibendum laoreet. Aenean euismod bibendum laoreet.</BenefitBody>
                  </div>
                </Benefit>
              ))}
            </BenefitGrid>
            <CenterBtn $w={124} $h={24.5} $fs={11}>Becoming a Member</CenterBtn>
          </BenefitBand>
          <SectionHead $fs={19.8} $lh={24} $mt={26.5} $shift={-2}>Convenience Headline</SectionHead>
          <SubHead>A wide selection of modern local branches and fully featured mobile banking.</SubHead>
          <BottomBoxes>
            <MapBox>
              <FaintMap />
              <MapGrey />
            </MapBox>
            <MobileBox>
              <Phone><PhoneSlot /></Phone>
              <MobileTitle>Mobile Banking</MobileTitle>
            </MobileBox>
          </BottomBoxes>
        </Inner>
      </Panel>

      {/* PANEL 2 */}
      <Panel $w={797} $ml={30} $closed>
        <Inner $w={795}>
          <Header top={43} pt={0} linksMl={246} tabW={129} tabPl={32} searchW={191} navH={27} navW={[139, 74, 103, 119]} linkW={[49, 58, 54]} />
          <Crumbs $mt={15} $pl={32}><a>Home</a> / <a>Library</a> / <b>Breadcrumbs</b></Crumbs>
          <Rule $mt={10} $ml={32} $w={727} $c="#b5b5b5" />
          <PageTitle>Our Locations</PageTitle>
          <FilterBand>
            <CityBox>
              Enter your city or ZIP
              <svg width="12" height="12" viewBox="0 0 12 12"><circle cx="5" cy="5" r="3.6" fill="none" stroke="#111" strokeWidth="1.6" /><path d="M7.8 7.8L11 11" stroke="#111" strokeWidth="2" /></svg>
            </CityBox>
            <ShowLabel>Show:</ShowLabel>
            <Check $w={112}><CheckBox><Tick /></CheckBox>Branches</Check>
            <Check $w={122}><CheckBox><Tick /></CheckBox>Loan Centers</Check>
            <Check $w={120}><CheckBox><Tick /></CheckBox>No-Fee ATMs</Check>
          </FilterBand>
          <LocatorRow>
            <ListCol>
              <FeatureBox>Show locations with these features...<Plus>+</Plus></FeatureBox>
              <ListRule />
              <Loc1 n={1} name="Camelback" dist="4.49mi" a="1630 E. Camelback Road Ste. 110" b="Phoenix, AZ 85016" h={102} pt={6} />
              <Loc1 n={2} name="Missouri" dist="4.76mi" a="5555 N. 7th Street - Suite 140" b="Phoenix, AZ 85014" h={101} pt={7} />
              <Loc $h={115} $pt={6}>
                <LocNum>3</LocNum>
                <LocBody>
                  <LocName>South Mountain Community<br />College - ATM Only <span>- 5.36mi</span></LocName>
                  <LocLine $mt={5}>7050 S. 24th Street</LocLine>
                  <LocLine>Phoenix, AZ 85040</LocLine>
                  <LocLine $mt={8}>Hours:</LocLine>
                  <LocLine>Available 24-7 all year round</LocLine>
                  <LocLinks $mt={5}><a>View Details</a><a>Get Directions</a></LocLinks>
                </LocBody>
              </Loc>
              <Loc $h={70} $pt={10} $end>
                <LocNum>4</LocNum>
                <LocBody>
                  <LocName>Indian School Wal-Mart - In<br />Store Branch <span>- 5.5mi</span></LocName>
                  <LocLine $mt={5}>5250 W. Indian School Rd.</LocLine>
                  <LocLine>Phoenix, AZ 85031</LocLine>
                </LocBody>
              </Loc>
              <ScrollThumb />
            </ListCol>
            <MapArea>
              <LocatorMap />
              <Pin $x={149} $y={100} $s={15}>1</Pin>
              <Pin $x={204} $y={180} $s={19}>6</Pin>
              <Pin $x={333} $y={172} $s={19}>3</Pin>
              <Pin $x={292} $y={206} $s={19}>2</Pin>
              <Pin $x={299} $y={227} $s={19}>1</Pin>
              <Pin $x={360} $y={220} $s={19}>4</Pin>
              <Pin $x={326} $y={295} $s={19}>5</Pin>
              <MapToggle><span>Map</span><span>Satellite</span></MapToggle>
            </MapArea>
          </LocatorRow>
          <NeedHead>Need a branch outside our area?</NeedHead>
          <NeedText>
            Access your Desert Schools accounts at Shared Branching credit union locations and ATMs nationwide. Make deposits, loan payments, advances, balance inquiries and transfers.
            <br />
            Shared Branching is a free program; however, it requires that you opt-in and verify your identity in advance. Also, you will need your full 10-digit account number.
            <br />
            Simply call (602) 433-7000 to answer a few questions.
          </NeedText>
          <HelpBand>
            <HelpLead>We're here to help.</HelpLead>
            <HelpStrong $w={241}>Sales:  1 (800) 456-9171</HelpStrong>
            <HelpStrong $w={280}>Customer Service:  1 (800) 456-9000</HelpStrong>
          </HelpBand>
          <FooterCols>
            <div>
              <FootHead>Personal</FootHead>
              <FootList $lh={14.3}>
                <a>Checkings</a><a>Savings</a><a>Auto Loans</a><a>Home Loans</a><a>Personal Loans</a><a>Student Loans</a><a>Credit Cards</a><a>Financial Planning</a><a>Insurance</a>
              </FootList>
            </div>
            <div>
              <FootHead>Business</FootHead>
              <FootList $lh={14.6}>
                <a>Checkings</a><a>Savings</a><a>Loans</a><a>Credit Cards</a><a>Business Services</a><a>Investing &amp; Insurance</a><a>Services</a>
              </FootList>
            </div>
            <div>
              <FootHead>Membership</FootHead>
              <FootList $lh={16} $mt={2}>
                <a>Membership Benefits</a><a>What's Different About a Credit Union?</a><a>Join Now</a>
              </FootList>
              <FootHead $mt={13} $big>Content</FootHead>
              <FootList $lh={15.6} $mt={1}>
                <a>Community Content</a><a>Financial Content</a><a>Placeholder</a><a>Placeholder</a>
              </FootList>
            </div>
            <div>
              <FootHead>About Desert Schools</FootHead>
              <FootList $lh={15.6} $mt={2}>
                <a>Community Involvement</a><a>Contact Us</a><a>Locations</a><a>Holiday Schedule</a><a>Careers</a>
              </FootList>
              <FootHead $mt={10} $big>Media</FootHead>
              <FootHead $mt={5} $big>Events</FootHead>
            </div>
          </FooterCols>
          <Rule $mt={0} $ml={31} $w={727} $c="#c8c8c8" />
          <FootBottom>
            <Social>
              <svg width="17" height="17" viewBox="0 0 17 17"><rect width="17" height="17" fill="#3b5998" /><path d="M9.500 17V10h2.300l.4-2.800H9.500V5.600c0-.8.3-1.300 1.400-1.300h1.400V1.800C12 1.700 11.200 1.700 10.300 1.700 8.200 1.700 6.800 3 6.800 5.200v2H4.500V10h2.300v7z" fill="#fff" /></svg>
              <svg width="17" height="17" viewBox="0 0 17 17"><rect width="17" height="17" fill="#29a9e1" /><path d="M14 4.800c-.4.2-.9.3-1.300.4.5-.3.8-.7 1-1.300-.4.3-.9.5-1.400.6a2.300 2.300 0 0 0-3.900 2.100A6.400 6.400 0 0 1 3.700 4.200a2.300 2.300 0 0 0 .7 3c-.4 0-.7-.1-1-.3 0 1.100.8 2 1.800 2.300-.3.1-.7.1-1 0 .3.900 1.100 1.600 2.100 1.600A4.600 4.600 0 0 1 3 11.800 6.400 6.400 0 0 0 12.900 6.100c.4-.3.800-.7 1.100-1.300z" fill="#fff" /></svg>
            </Social>
            <LegalLinks>
              <Legal $w={69}>Site Map</Legal>
              <Legal $w={54}>Legal</Legal>
              <Legal $w={108}>Terms &amp; Conditions</Legal>
              <Legal $w={70}>Privacy Policy</Legal>
            </LegalLinks>
            <Badges>
              <Ncua>NCUA</Ncua>
              <svg width="20" height="24" viewBox="0 0 20 24"><path d="M10 1L1 6v1.500h1.500V16h15V7.500H19V6z" fill="none" stroke="#444" strokeWidth="2" /><rect x="6" y="7" width="8" height="2" fill="#444" /><rect x="6" y="11" width="8" height="2" fill="#444" /><text x="10" y="23" fontSize="5" fontFamily="Lato, sans-serif" fill="#777" textAnchor="middle">LENDER</text></svg>
            </Badges>
          </FootBottom>
          <Copy>©2014 Desert Schools Federal Credit Union</Copy>
        </Inner>
      </Panel>

      {/* PANEL 3 */}
      <Panel $w={793} $ml={31}>
        <Inner $w={780}>
          <Header top={47} pt={4} linksMl={236} tabW={127} tabPl={31} searchW={187} navH={26} navW={[135, 73, 101, 117]} linkW={[49, 57, 52]} />
          <Crumbs $mt={9} $pl={31} $dark><a>Home</a> / <a>Library</a> / <b>Breadcrumbs</b></Crumbs>
          <SkyHero>
            <div>
              <SkyTitle>Desert Skyline Checking</SkyTitle>
              <SkyText>
                Lorem ipsum dolor sit amet, consectetur adipiscing elit. Suspendisse
                <br />
                metus lectus, mollis non semper a, rhoncus non massa.
              </SkyText>
            </div>
            <SkyBtn $w={157} $h={35} $fs={13}>Apply Now</SkyBtn>
          </SkyHero>
          <SectionHead $fs={19.5} $lh={26} $mt={20} $color="#222">About Desert Skyline Checking</SectionHead>
          <TwoCols>
            <div>
              <MiniHead>At a Glance</MiniHead>
              <Copy10>Lorem ipsum dolor sit amet, consectetur adipiscing elit. Aenean euismod bibendum<br />laoreet. Proin gravida dolor sit amet lacus accumsan et viverra justo commodo. Proin<br />sodales pulvinar tempor.</Copy10>
              <Copy10>Lorem ipsum dolor sit amet, consectetur adipiscing elit. Aenean euismod bibendum<br />laoreet. Proin gravida dolor sit amet lacus accumsan et viverra justo commodo. Proin<br />sodales pulvinar tempor.</Copy10>
            </div>
            <div>
              <MiniHead>Key Features</MiniHead>
              <Copy10 $mb={10.7}>• Lorem ipsum dolor sit amet, consectetur adipiscing elit.</Copy10>
              <Copy10 $mb={10.7}>• Aenean euismod bibendum laoreet.</Copy10>
              <Copy10 $mb={10.7}>• Proin gravida dolor sit amet lacus accumsan et viverra justo commodo.</Copy10>
              <Copy10 $mb={0}>• Proin sodales pulvinar tempor.</Copy10>
            </div>
          </TwoCols>
          <ApplyBtn $w={90} $h={23} $fs={12.5}>Apply Now</ApplyBtn>
          <LearnLink>Learn more about membership</LearnLink>
          <SayBand>
            <SectionHead $fs={19} $lh={24} $mt={0} $shift={-3}>What Our Customers Say</SectionHead>
            <SayRow>
              {["March 10, 2014", "March 2, 2014"].map((d) => (
                <Say key={d}>
                  <Person />
                  <Quote>
                    "Customer Testimonial. Lorem ipsum dolor sit amet, consectetur
                    <br />
                    adipiscing elit. Aenean euismod bibendum laoreet. Proin gravida
                    <br />
                    dolor sit amet lacus accumsan et viverra justo."
                    <Cite>
                      ~ Customer Name, Occupation, Age, etc
                      <br />
                      {d}
                    </Cite>
                  </Quote>
                </Say>
              ))}
            </SayRow>
            <Pager>
              <Chevron left ml={0} mr={17} />
              <Dot $on />
              <Dot />
              <Dot />
              <Chevron ml={15} mr={0} />
            </Pager>
          </SayBand>
          <SectionHead $fs={19.5} $lh={24} $mt={18} $color="#222">Recommended For You</SectionHead>
          <RecGrid>
            {recs.map((r, i) => (
              <div key={i}>
                <RecImg />
                <RecTitle>{r}</RecTitle>
                <RecText>Lorem ipsum dolor sit amet, consectetur<br />adipiscing elit. Aenean euismod bibendum<br />laoreet. Proin gravida dolor sit amet lacus<br />accumsan et viverra justo commodo. Proin<br />sodales pulvinar tempor.</RecText>
                <RecMore>Learn more</RecMore>
              </div>
            ))}
          </RecGrid>
          <QuestionBand>
            <QuestionTitle>Got Questions?</QuestionTitle>
            <QuestionItem $gap={15}>
              <Thumb $w={38} $h={60} />
              <QuestionText $mt={1}>Learn More<br />About Checking</QuestionText>
            </QuestionItem>
            <QuestionItem $gap={13}>
              <Thumb $w={37} $h={60} />
              <QuestionText $mt={1}>Contact Member<br />Assistance</QuestionText>
            </QuestionItem>
            <QuestionItem $gap={10}>
              <Thumb $w={37} $h={60} />
              <QuestionText $mt={9}>Find Nearest Branch</QuestionText>
            </QuestionItem>
          </QuestionBand>
        </Inner>
      </Panel>
    </Page>
  );
}
